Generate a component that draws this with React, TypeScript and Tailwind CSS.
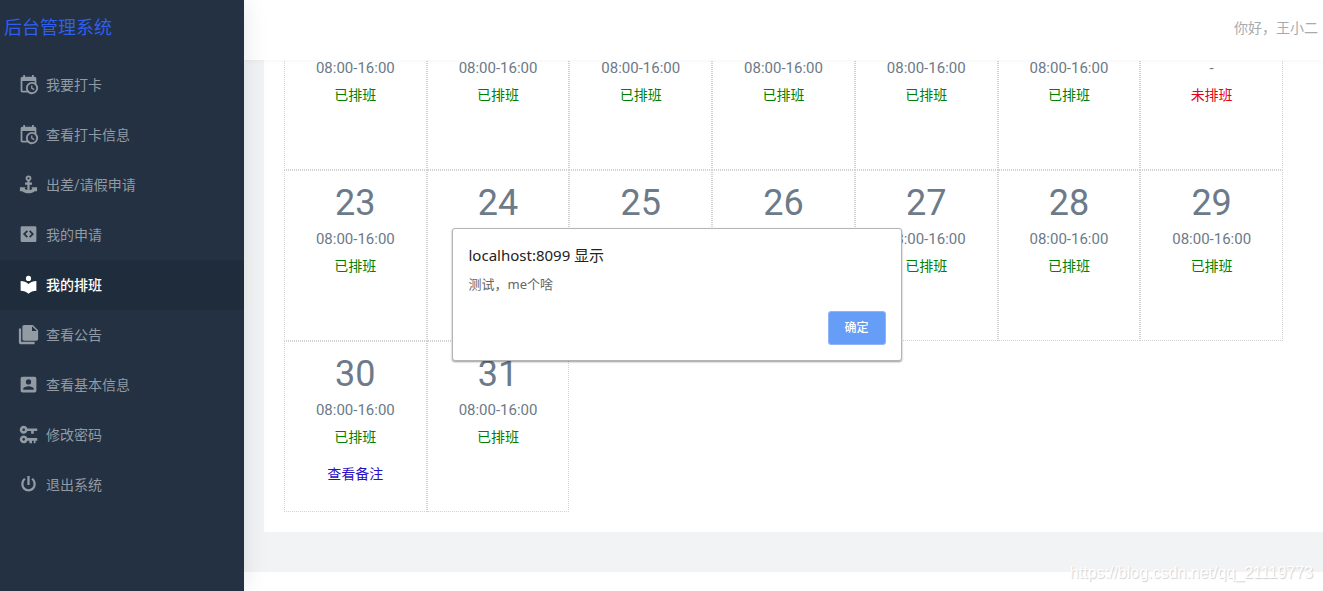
import { useState } from "react";

const icons = {
  calendar: "M15,13H16.5V15.82L18.94,17.23L18.19,18.53L15,16.69V13M19,8H5V19H9.67C9.24,18.09 9,17.07 9,16A7,7 0 0,1 16,9C17.07,9 18.09,9.24 19,9.67V8M5,21C3.89,21 3,20.1 3,19V5C3,3.89 3.89,3 5,3H6V1H8V3H16V1H18V3H19A2,2 0 0,1 21,5V11.1C22.24,12.36 23,14.09 23,16A7,7 0 0,1 16,23C14.09,23 12.36,22.24 11.1,21H5M16,11.15A4.85,4.85 0 0,0 11.15,16C11.15,18.68 13.32,20.85 16,20.85A4.85,4.85 0 0,0 20.85,16C20.85,13.32 18.68,11.15 16,11.15Z",
  anchor: "M12,1.6A3.3,3.3 0 0,0 8.7,5C8.7,6.3 9.5,7.4 10.7,7.9V9.6H8V12.2H10.7V18.4C9.2,18.1 8.2,17.6 7.6,16.8L8.8,15H2.2V19.6H4.9C6.8,21.3 9.2,22 12,22S17.2,21.3 19.1,19.6H21.8V15H15.2L16.4,16.8C15.8,17.6 14.8,18.1 13.3,18.4V12.2H16V9.6H13.3V7.9C14.5,7.4 15.3,6.3 15.3,5A3.3,3.3 0 0,0 12,1.6M12,3.8A1.2,1.2 0 0,1 13.2,5A1.2,1.2 0 0,1 12,6.2A1.2,1.2 0 0,1 10.8,5A1.2,1.2 0 0,1 12,3.8Z",
  code: "M4.5,2.5H19.5A1.5,1.5 0 0,1 21,4V19A1.5,1.5 0 0,1 19.5,20.5H4.5A1.5,1.5 0 0,1 3,19V4A1.5,1.5 0 0,1 4.5,2.5M10,7.2L5.7,11.5L10,15.8L11.4,14.4L8.5,11.5L11.4,8.6L10,7.2M14,7.2L12.6,8.6L15.5,11.5L12.6,14.4L14,15.8L18.3,11.5L14,7.2Z",
  library: "M12,8A3,3 0 0,0 15,5A3,3 0 0,0 12,2A3,3 0 0,0 9,5A3,3 0 0,0 12,8M12,11.54C9.64,9.35 6.5,8 3,8V19C6.5,19 9.64,20.35 12,22.54C14.36,20.35 17.5,19 21,19V8C17.5,8 14.36,9.35 12,11.54Z",
  files: "M16,8H21.5L16,2.5V8M7,1H17L23,7V17A2,2 0 0,1 21,19H7C5.89,19 5,18.1 5,17V3A2,2 0 0,1 7,1M3.6,5V20.4H19V23H3A2,2 0 0,1 1,21V5H3.6Z",
  account: "M6,17C6,15 10,13.9 12,13.9C14,13.9 18,15 18,17V18H6M15,9A3,3 0 0,1 12,12A3,3 0 0,1 9,9A3,3 0 0,1 12,6A3,3 0 0,1 15,9M3,5V19A2,2 0 0,0 5,21H19A2,2 0 0,0 21,19V5A2,2 0 0,0 19,3H5C3.89,3 3,3.9 3,5Z",
  keys: "M6.5,2C8.46,2 10.13,3.25 10.74,5H22V8H18V11H15V8H10.74C10.13,9.75 8.46,11 6.5,11C4,11 2,9 2,6.5C2,4 4,2 6.5,2M6.5,5A1.5,1.5 0 0,0 5,6.5A1.5,1.5 0 0,0 6.5,8A1.5,1.5 0 0,0 8,6.5A1.5,1.5 0 0,0 6.5,5M6.5,13C8.46,13 10.13,14.25 10.74,16H22V19H20V22H18V19H16V22H13V19H10.74C10.13,20.75 8.46,22 6.5,22C4,22 2,20 2,17.5C2,15 4,13 6.5,13M6.5,16A1.5,1.5 0 0,0 5,17.5A1.5,1.5 0 0,0 6.5,19A1.5,1.5 0 0,0 8,17.5A1.5,1.5 0 0,0 6.5,16Z",
  power: "M17,4.6L15.2,6.4C16.9,7.5 17.7,9.6 17.7,11.8A5.7,5.7 0 0,1 12,17.5A5.7,5.7 0 0,1 6.3,11.8C6.3,9.6 7.1,7.5 8.8,6.4L7,4.6C4.9,6.2 3.7,8.9 3.7,11.8A8.3,8.3 0 0,0 12,20.1A8.3,8.3 0 0,0 20.3,11.8C20.3,8.9 19.1,6.2 17,4.6M13.3,2.4H10.7V12.6H13.3Z",
};

const menu = [
  { icon: icons.calendar, text: "我要打卡" },
  { icon: icons.calendar, text: "查看打卡信息" },
  { icon: icons.anchor, text: "出差/请假申请" },
  { icon: icons.code, text: "我的申请" },
  { icon: icons.library, text: "我的排班", active: true },
  { icon: icons.files, text: "查看公告" },
  { icon: icons.account, text: "查看基本信息" },
  { icon: icons.keys, text: "修改密码" },
  { icon: icons.power, text: "退出系统" },
];

const days = Array.from({ length: 16 }, (_, i) => ({
  day: 16 + i,
  time: i === 6 ? "-" : "08:00-16:00",
  scheduled: i !== 6,
  note: i === 14,
}));

function Sidebar() {
  return (
    <aside className="relative z-20 w-61 shrink-0 bg-[#233142] shadow-[0_0_24px_rgba(0,0,0,0.1)]">
      <h1 className="flex h-15 items-center px-1 pb-1 text-lg text-[#2f5fee]">后台管理系统</h1>
      <nav>
        {menu.map((item) => (
          <a
            key={item.text}
            href="#"
            className={
              item.active
                ? "flex h-[50px] items-center gap-[7px] bg-[#1f2c3b] pb-px pl-[18px] text-sm font-medium text-white"
                : "flex h-[50px] items-center gap-[7px] pb-px pl-[18px] text-sm text-[#929aa3]"
            }
          >
            <svg viewBox="0 0 24 24" className="size-[21px] fill-current" fillRule="evenodd" aria-hidden="true">
              <path d={item.icon} />
            </svg>
            {item.text}
          </a>
        ))}
      </nav>
    </aside>
  );
}

function Calendar() {
  return (
    <div className="grid grid-cols-7">
      {days.map((d) => (
        <div key={d.day} className="h-[171px] border border-dotted border-[#d2d2d2] pt-3 text-center text-[#6c7a89]">
          <div className="text-4xl leading-10">{d.day}</div>
          <div className="mt-0.5 text-[15px] leading-7">{d.time}</div>
          <div className={d.scheduled ? "text-sm leading-[26px] text-[#008000]" : "text-sm leading-[26px] text-[#e6001a]"}>
            {d.scheduled ? "已排班" : "未排班"}
          </div>
          {d.note && (
            <a href="#" className="mt-[11px] inline-block text-sm leading-[26px] text-[#2a0fc4]">
              查看备注
            </a>
          )}
        </div>
      ))}
    </div>
  );
}

function AlertBox({ onClose }: { onClose: () => void }) {
  return (
    <div
      role="alertdialog"
      aria-labelledby="alert-title"
      className="absolute top-57 left-1/2 z-30 w-[450px] -translate-x-[210px] rounded-[3px] border border-[#b4b4b4] bg-white pt-[15px] pr-[15px] pb-[15px] pl-4 font-['Noto_Sans','Noto_Sans_CJK_SC',sans-serif] shadow-[0_1px_2px_rgba(0,0,0,0.4)]"
    >
      <h2 id="alert-title" className="text-[15px] leading-[22px] text-[#222]">localhost:8099 显示</h2>
      <p className="mt-2 text-[13px] leading-5 text-[#666]">测试，me个啥</p>
      <div className="mt-[17px] flex justify-end">
        <button onClick={onClose} className="h-[34px] w-[58px] rounded-[3px] border border-[#8fb4f8] bg-[#669df6] text-xs font-medium text-white">
          确定
        </button>
      </div>
    </div>
  );
}

export default function App() {
  const [showAlert, setShowAlert] = useState(true);

  return (
    <div className="relative flex h-screen overflow-hidden bg-white font-['Roboto','Noto_Sans_CJK_SC',sans-serif]">
      <Sidebar />
      <div className="min-w-0 flex-1">
        <header className="relative z-10 flex h-15 items-center justify-end bg-white px-[5px] pb-1 text-sm text-[#a5abb0] shadow-[0_0_6px_rgba(0,0,0,0.06)]">
          你好，王小二
        </header>
        {/* the list is scrolled, so its top row sits partly behind the header */}
        <main className="-mt-[61px] bg-[#f2f3f5] pb-10 pl-5">
          <div className="bg-white pr-10 pb-5 pl-5">
            <Calendar />
          </div>
        </main>
      </div>
      {showAlert && <AlertBox onClose={() => setShowAlert(false)} />}
      <div className="absolute right-2.5 bottom-1.5 z-10 font-['Liberation_Sans',sans-serif] text-base text-white [text-shadow:1px_1px_1px_#d0d0d0]">
        https://blog.csdn.net/qq_21119773
      </div>
    </div>
  );
}
